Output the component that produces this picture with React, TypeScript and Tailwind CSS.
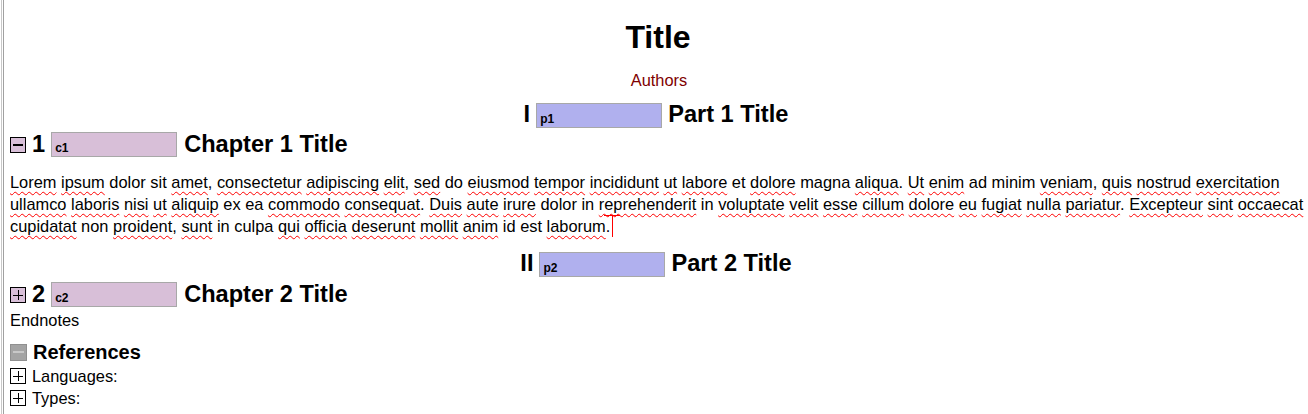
const misspelled = new Set([
  "Lorem", "ipsum", "amet", "consectetur", "adipiscing", "elit", "sed", "eiusmod", "tempor",
  "incididunt", "ut", "labore", "dolore", "aliqua", "Ut", "enim", "veniam", "quis", "nostrud",
  "exercitation", "ullamco", "laboris", "nisi", "aliquip", "commodo", "consequat", "Duis",
  "aute", "irure", "reprehenderit", "voluptate", "velit", "esse", "cillum", "eu", "fugiat",
  "nulla", "pariatur", "Excepteur", "sint", "occaecat", "cupidatat", "proident", "sunt", "qui",
  "officia", "deserunt", "mollit", "anim", "laborum",
]);

const lines = [
  "Lorem ipsum dolor sit amet, consectetur adipiscing elit, sed do eiusmod tempor incididunt ut labore et dolore magna aliqua. Ut enim ad minim veniam, quis nostrud exercitation",
  "ullamco laboris nisi ut aliquip ex ea commodo consequat. Duis aute irure dolor in reprehenderit in voluptate velit esse cillum dolore eu fugiat nulla pariatur. Excepteur sint occaecat",
  "cupidatat non proident, sunt in culpa qui officia deserunt mollit anim id est laborum.",
];

function Line({ text }: { text: string }) {
  const words = text.split(" ");
  return (
    <div className="whitespace-nowrap">
      {words.map((w, i) => {
        const m = w.match(/^([A-Za-z]+)(.*)$/);
        const word = m ? m[1] : w;
        const rest = m ? m[2] : "";
        return (
          <span key={i}>
            {misspelled.has(word) ? (
              <span className="underline decoration-wavy decoration-[#ff0000] decoration-1 underline-offset-[3px]">
                {word}
              </span>
            ) : (
              word
            )}
            {rest}
            {i < words.length - 1 ? " " : ""}
          </span>
        );
      })}
    </div>
  );
}

function Toggle({ open, fill }: { open: boolean; fill: string }) {
  return (
    <span
      className={`relative inline-flex size-[16px] shrink-0 items-center justify-center border border-black ${fill}`}
    >
      {open ? (
        <span className="h-[2px] w-[10px] bg-black" />
      ) : (
        <>
          <span className="absolute h-[1px] w-[10px] bg-black" />
          <span className="absolute h-[10px] w-[1px] bg-black" />
        </>
      )}
    </span>
  );
}

function Label({ text, color }: { text: string; color: string }) {
  return (
    <span
      className={`inline-flex h-[25px] w-[126px] items-end border border-[#a8a8a8] pb-[2px] pl-[3px] text-[12px] font-bold leading-none ${color}`}
    >
      {text}
    </span>
  );
}

function PartRow({ num, label, title }: { num: string; label: string; title: string }) {
  return (
    <div className="flex h-[30px] items-center justify-center gap-[6px] pr-[6px] text-[23.6px] font-bold">
      <span>{num}</span>
      <Label text={label} color="bg-[#b0b0ee]" />
      <span>{title}</span>
    </div>
  );
}

function ChapterRow({ open, num, label, title }: { open: boolean; num: string; label: string; title: string }) {
  return (
    <div className="flex h-[30px] items-center text-[23.6px] font-bold">
      <Toggle open={open} fill="bg-[#d8bfd8]" />
      <span className="ml-[6px]">{num}</span>
      <span className="ml-[6px]">
        <Label text={label} color="bg-[#d8bfd8]" />
      </span>
      <span className="ml-[7px]">{title}</span>
    </div>
  );
}

export default function App() {
  return (
    <div
      className="flex min-h-screen bg-white text-black"
      style={{ fontFamily: '"Liberation Sans", Arial, sans-serif' }}
    >
      <div className="ml-[1px] w-[1px] bg-[#c8c8c8]" />
      <div className="ml-[1px] w-[1px] bg-[#a0a0a0]" />
      <main className="flex-1 pl-[6px]">
        <div className="h-[17px]" />
        <div className="flex h-[40px] items-center justify-center pr-[2px] text-[32px] font-bold">Title</div>
        <div className="mt-[12px] flex h-[22px] items-center justify-center text-[16.4px] text-[#800000]">
          Authors
        </div>
        <div className="h-[9px]" />
        <PartRow num="I" label="p1" title="Part 1 Title" />
        <ChapterRow open num="1" label="c1" title="Chapter 1 Title" />

        <div className="mt-[11px] text-[16.4px] leading-[22px]">
          <Line text={lines[0]} />
          <Line text={lines[1]} />
          <div className="flex items-center">
            <Line text={lines[2]} />
            <span className="relative ml-[2px] inline-block h-[22px] w-[1px] bg-[#ff0000]">
              <span className="absolute left-[-8px] top-0 h-[1px] w-[16px] bg-[#ff0000]" />
            </span>
          </div>
        </div>

        <div className="h-[12px]" />
        <PartRow num="II" label="p2" title="Part 2 Title" />
        <div className="mt-[1px]">
          <ChapterRow open={false} num="2" label="c2" title="Chapter 2 Title" />
        </div>
        <div className="flex h-[20px] items-center text-[16.4px]">Endnotes</div>

        <div className="mt-[10px] flex h-[24px] items-center text-[20px] font-bold">
          <span className="inline-flex size-[17px] items-center justify-center border border-[#909090] bg-[#a4a4a4]">
            <span className="h-[2px] w-[11px] bg-[#c8c8c8]" />
          </span>
          <span className="ml-[6px]">References</span>
        </div>
        <div className="mt-[1px] flex h-[22px] items-center text-[16.4px]">
          <Toggle open={false} fill="bg-white" />
          <span className="ml-[6px]">Languages:</span>
        </div>
        <div className="flex h-[22px] items-center text-[16.4px]">
          <Toggle open={false} fill="bg-white" />
          <span className="ml-[6px]">Types:</span>
        </div>
      </main>
    </div>
  );
}
